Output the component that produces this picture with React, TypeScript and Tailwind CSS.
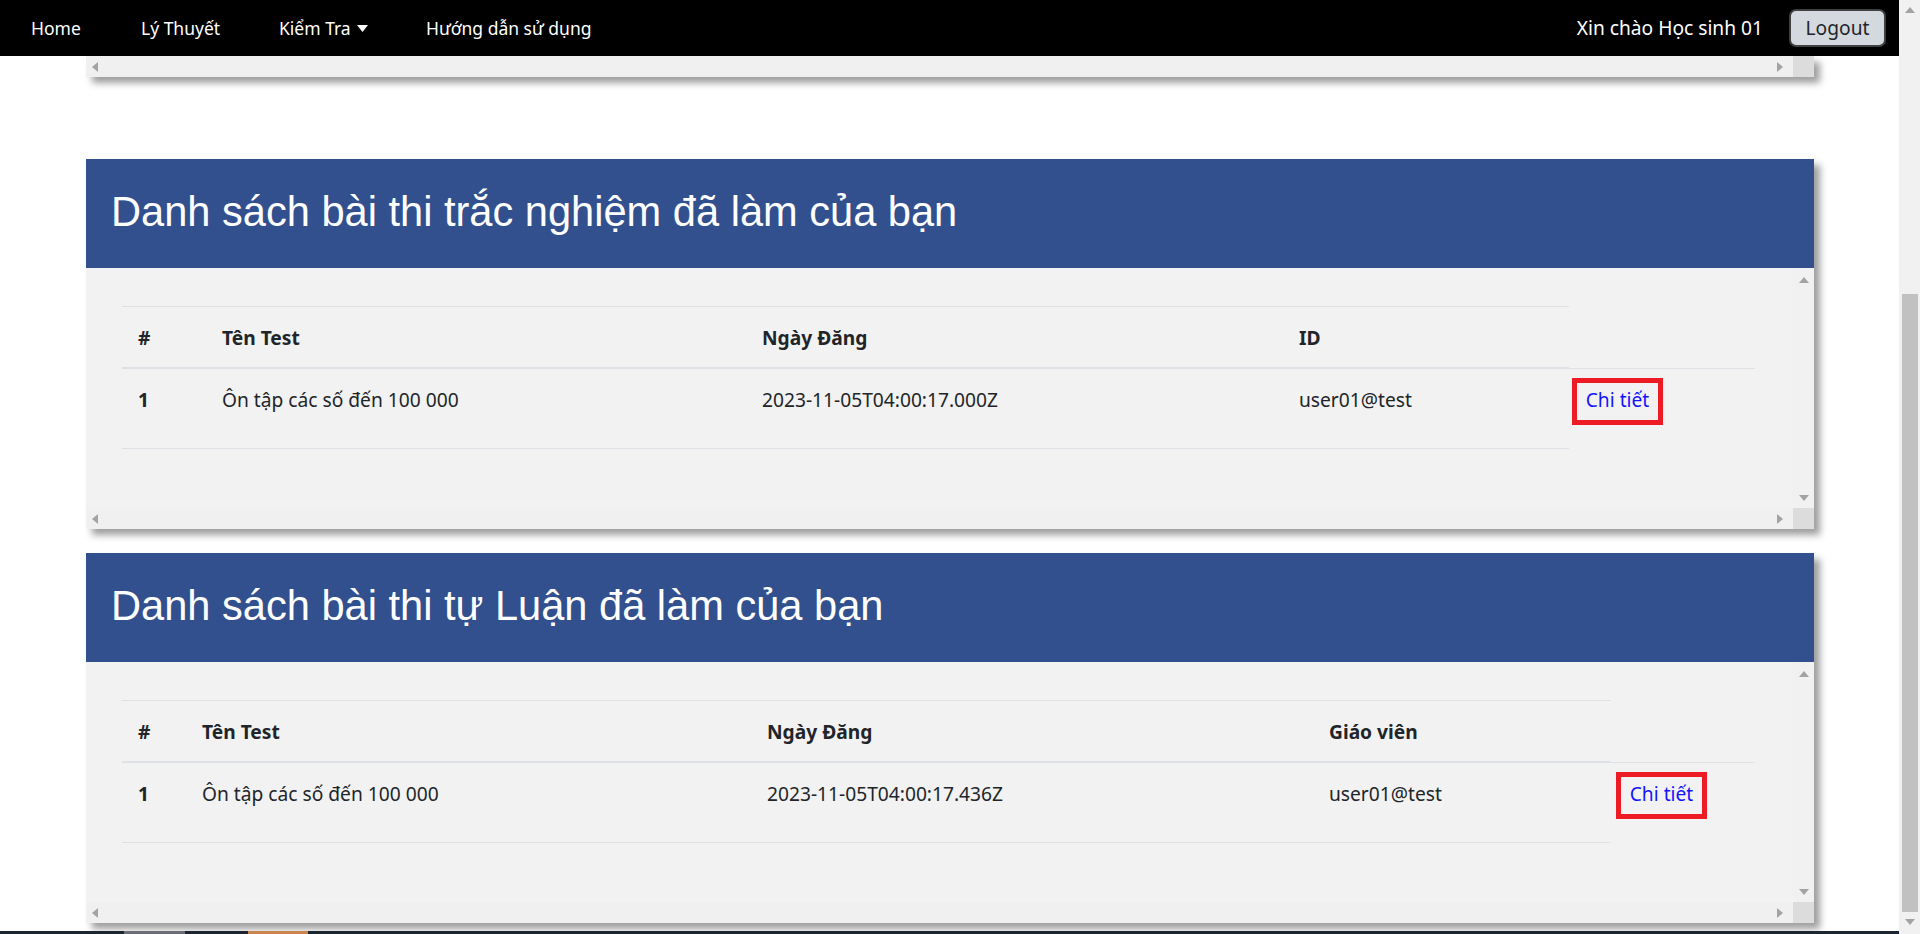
import React from 'react';

const body = { fontFamily: '"Noto Sans", "Open Sans", sans-serif' };
const head = { fontFamily: '"Liberation Sans", Arial, sans-serif' };

function Arrow({ dir }: { dir: 'up' | 'down' | 'left' | 'right' }) {
  const pts = {
    up: '0,7 5,1 10,7',
    down: '0,1 5,7 10,1',
    left: '7,0 1,5 7,10',
    right: '1,0 7,5 1,10',
  }[dir];
  const vertical = dir === 'up' || dir === 'down';
  return (
    <svg width={vertical ? 10 : 8} height={vertical ? 8 : 10} viewBox={vertical ? '0 0 10 8' : '0 0 8 10'}>
      <polygon points={pts} fill="#a3a3a3" />
    </svg>
  );
}

function HScrollbar() {
  return (
    <div className="flex h-[21px] w-full">
      <div className="flex flex-1 items-center justify-between bg-[#f0f0f0] pl-[5px] pr-[9px]">
        <Arrow dir="left" />
        <Arrow dir="right" />
      </div>
      <div className="w-[21px] bg-[#dcdcdc]" />
    </div>
  );
}

type Col = { label: string; value: string };

function Panel({
  title,
  cols,
  template,
  boxOffset,
}: {
  title: string;
  cols: Col[];
  template: string;
  boxOffset: string;
}) {
  return (
    <section className="ml-[86px] w-[1728px] shadow-[6px_6px_7px_rgba(0,0,0,0.38)]">
      <div className="flex h-[109px] items-center bg-[#32508e] pb-[4px] pl-[25px]">
        <h2 style={head} className="text-[41.6px] font-normal leading-none text-white">
          {title}
        </h2>
      </div>
      <div className="flex h-[240px] bg-[#f2f2f2]">
        <div style={body} className="flex-1 pl-[36px] pt-[38px] text-[19.2px] text-[#212529]">
          <div className={`grid ${template}`}>
            {cols.map((c) => (
              <div
                key={c.label}
                className="flex h-[62px] items-center border-t border-b border-[#dee2e6] pl-4 pt-[2px] font-bold"
              >
                {c.label}
              </div>
            ))}
            <div />
            {cols.map((c, i) => (
              <div
                key={c.label + '-v'}
                className={`h-[81px] border-t border-b border-[#dee2e6] pl-4 pt-[17px] leading-[28.8px] ${
                  i === 0 ? 'font-bold' : ''
                }`}
              >
                {c.value}
              </div>
            ))}
            <div className="h-[81px] border-t border-[#dee2e6]">
              <div
                className={`mt-[9px] ${boxOffset} flex h-[47px] w-[91px] items-center justify-center border-[5px] border-[#ed1c24] pb-[2px] text-[#1414ff]`}
              >
                Chi tiết
              </div>
            </div>
          </div>
        </div>
        <div className="flex w-[21px] flex-col items-center justify-between bg-[#f1f1f1] pb-[6px] pt-[8px]">
          <Arrow dir="up" />
          <Arrow dir="down" />
        </div>
      </div>
      <HScrollbar />
    </section>
  );
}

export default function App() {
  return (
    <div className="flex h-[934px] w-[1920px] overflow-hidden bg-white">
      <div className="flex w-[1899px] flex-col">
        <nav style={body} className="flex h-[56px] items-center bg-black pl-[31px] pr-[13px] text-[19.2px] text-white">
          <a className="w-[110px] text-[17.5px]">Home</a>
          <a className="w-[138px] text-[17.5px]">Lý Thuyết</a>
          <a className="flex w-[147px] items-center gap-[6px] text-[17.5px]">
            Kiểm Tra
            <svg width="11" height="7" viewBox="0 0 11 7">
              <polygon points="0,0 11,0 5.5,7" fill="white" />
            </svg>
          </a>
          <a className="text-[17.5px]">Hướng dẫn sử dụng</a>
          <div className="ml-auto flex items-center gap-[26px]">
            <span>Xin chào Học sinh 01</span>
            <button className="h-[38px] w-[97px] rounded-[7px] border-2 border-[#3f3f3f] bg-[#d4d9df] text-[#212529]">
              Logout
            </button>
          </div>
        </nav>

        <div className="ml-[86px] w-[1728px] shadow-[6px_6px_7px_rgba(0,0,0,0.38)]">
          <HScrollbar />
        </div>

        <div className="mt-[82px]">
          <Panel
            title="Danh sách bài thi trắc nghiệm đã làm của bạn"
            template="grid-cols-[84px_540px_537px_286px_186px]"
            boxOffset="ml-[3px]"
            cols={[
              { label: '#', value: '1' },
              { label: 'Tên Test', value: 'Ôn tập các số đến 100 000' },
              { label: 'Ngày Đăng', value: '2023-11-05T04:00:17.000Z' },
              { label: 'ID', value: 'user01@test' },
            ]}
          />
        </div>

        <div className="mt-[24px]">
          <Panel
            title="Danh sách bài thi tự Luận đã làm của bạn"
            template="grid-cols-[64px_565px_562px_298px_144px]"
            boxOffset="ml-[5px]"
            cols={[
              { label: '#', value: '1' },
              { label: 'Tên Test', value: 'Ôn tập các số đến 100 000' },
              { label: 'Ngày Đăng', value: '2023-11-05T04:00:17.436Z' },
              { label: 'Giáo viên', value: 'user01@test' },
            ]}
          />
        </div>

        <div className="mt-auto flex h-[3px] bg-[#1c2530]">
          <div className="ml-[124px] w-[61px] bg-[#6b6f75]" />
          <div className="ml-[63px] w-[60px] bg-[#c8864e]" />
        </div>
      </div>

      <div className="flex w-[21px] flex-col items-center bg-[#f1f1f1]">
        <div className="pt-[6px]">
          <Arrow dir="up" />
        </div>
        <div className="mt-[280px] h-[618px] w-[16px] bg-[#c1c1c1]" />
        <div className="pt-[6px]">
          <Arrow dir="down" />
        </div>
      </div>
    </div>
  );
}
